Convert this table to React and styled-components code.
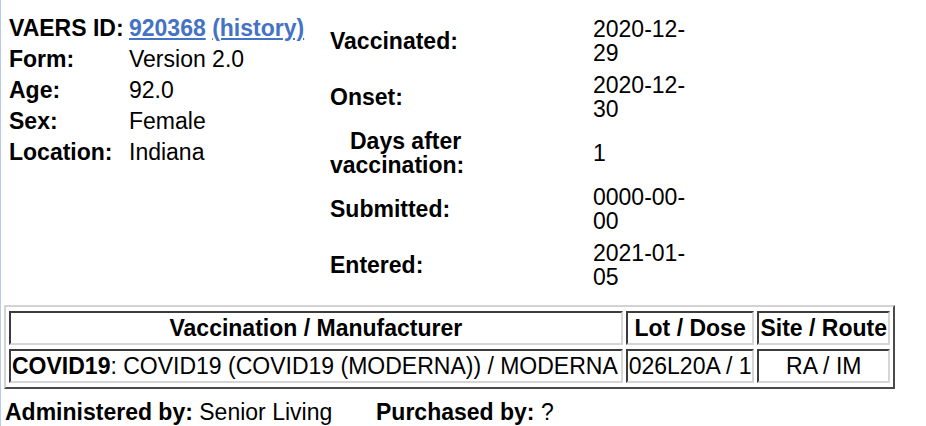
import React from 'react';
import styled, { createGlobalStyle } from 'styled-components';

const GlobalStyle = createGlobalStyle`
  html, body {
    margin: 0;
    padding: 0;
    background: #fff;
  }
  body {
    font-family: "Liberation Sans", Arial, Helvetica, sans-serif;
    color: #000;
  }
`;

const Page = styled.div`
  min-height: 100vh;
  box-sizing: border-box;
  border-left: 1px solid #b9cbec;
  padding: 0 0 0 3px;
  font-size: 23px;
`;

const Top = styled.div`
  display: flex;
  align-items: flex-start;
`;

const Summary = styled.div`
  width: 326px;
  box-sizing: border-box;
  padding: 13px 0 0 5px;
  display: grid;
  grid-template-columns: 120px auto;
  line-height: 31px;
`;

const Label = styled.div`
  font-weight: bold;
  white-space: nowrap;
`;

const Value = styled.div`
  white-space: nowrap;
`;

const IdLink = styled.a`
  color: #4472c4;
  font-weight: bold;
  text-decoration: underline;
`;

const Dates = styled.div`
  padding-top: 13px;
  display: grid;
  grid-template-columns: 263px 100px;
`;

const DateLabel = styled.div`
  font-weight: bold;
  line-height: 24.5px;
  padding: 3.5px 0;
  display: flex;
  align-items: center;
  min-height: 49px;
  span {
    display: block;
    width: 140px;
    text-indent: ${(p) => (p.$indent ? '20px' : '0')};
  }
`;

const DateValue = styled.div`
  line-height: 24.5px;
  padding: 3.5px 0;
  min-height: 49px;
  display: flex;
  align-items: center;
`;

const Vax = styled.table`
  margin-top: 12px;
  border-collapse: separate;
  border-spacing: 3px 4px;
  border: 2px solid;
  border-color: #d3d3d3 #4a4a4a #4a4a4a #d3d3d3;
  width: 891px;
  box-sizing: border-box;
  font-size: 23px;
`;

const Cell = styled.td`
  border: 2px solid;
  border-color: #3c3c3c #d6d6d6 #d6d6d6 #3c3c3c;
  padding: 2px 1px;
  line-height: 26px;
  white-space: nowrap;
  text-align: ${(p) => p.$align || 'left'};
  font-weight: ${(p) => (p.$head ? 'bold' : 'normal')};
`;

const Footer = styled.div`
  display: flex;
  margin-top: 10px;
  padding-left: 1px;
  line-height: 26px;
`;

const FooterItem = styled.div`
  width: ${(p) => p.$width || 'auto'};
  white-space: nowrap;
  b {
    font-weight: bold;
  }
`;

const dates = [
  { label: 'Vaccinated:', value: ['2020-12-', '29'] },
  { label: 'Onset:', value: ['2020-12-', '30'] },
  { label: 'Days after vaccination:', value: ['1'], indent: true },
  { label: 'Submitted:', value: ['0000-00-', '00'] },
  { label: 'Entered:', value: ['2021-01-', '05'] },
];

export default function App() {
  return (
    <>
      <GlobalStyle />
      <Page>
        <Top>
          <Summary>
            <Label>VAERS ID:</Label>
            <Value>
              <IdLink href="#">920368</IdLink> <IdLink href="#">(history)</IdLink>
            </Value>
            <Label>Form:</Label>
            <Value>Version 2.0</Value>
            <Label>Age:</Label>
            <Value>92.0</Value>
            <Label>Sex:</Label>
            <Value>Female</Value>
            <Label>Location:</Label>
            <Value>Indiana</Value>
          </Summary>
          <Dates>
            {dates.map((d) => (
              <React.Fragment key={d.label}>
                <DateLabel $indent={d.indent}>
                  <span>{d.label}</span>
                </DateLabel>
                <DateValue>
                  <div>
                    {d.value.map((v, i) => (
                      <React.Fragment key={i}>
                        {i > 0 && <br />}
                        {v}
                      </React.Fragment>
                    ))}
                  </div>
                </DateValue>
              </React.Fragment>
            ))}
          </Dates>
        </Top>
        <Vax>
          <tbody>
            <tr>
              <Cell $head $align="center" style={{ width: 609 }}>Vaccination / Manufacturer</Cell>
              <Cell $head $align="center">Lot / Dose</Cell>
              <Cell $head $align="center">Site / Route</Cell>
            </tr>
            <tr>
              <Cell>
                <b>COVID19</b>: COVID19 (COVID19 (MODERNA)) / MODERNA
              </Cell>
              <Cell>026L20A / 1</Cell>
              <Cell $align="center">RA / IM</Cell>
            </tr>
          </tbody>
        </Vax>
        <Footer>
          <FooterItem $width="371px">
            <b>Administered by:</b> Senior Living
          </FooterItem>
          <FooterItem>
            <b>Purchased by:</b> ?
          </FooterItem>
        </Footer>
      </Page>
    </>
  );
}
